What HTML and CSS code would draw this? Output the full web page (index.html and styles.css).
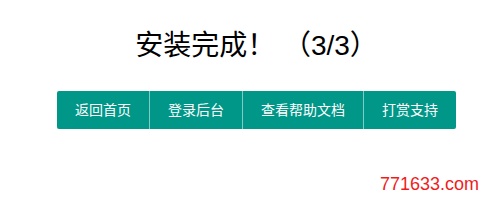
FILE: index.html
```html
<!DOCTYPE html>
<html lang="zh-CN">
<head>
    <meta charset="UTF-8">
    <meta name="viewport" content="width=device-width, initial-scale=1.0">
    <title>安装完成</title>
    <link rel="stylesheet" href="styles.css">
</head>
<body>
    <div class="install-done">
        <h2 class="title">安装完成！ （3/3）</h2>
        <div class="btn-group">
            <a class="btn" href="#">返回首页</a>
            <a class="btn" href="#">登录后台</a>
            <a class="btn" href="#">查看帮助文档</a>
            <a class="btn" href="#">打赏支持</a>
        </div>
    </div>
    <div class="watermark">771633.com</div>
</body>
</html>
```

FILE: styles.css
```css
body {
    margin: 0;
    background: #fff;
    font-family: "Liberation Sans", Arial, "Noto Sans CJK SC", sans-serif;
    color: #333;
}
.install-done {
    display: flex;
    flex-direction: column;
    align-items: center;
    padding: 26px 0 0 20px;
}
.title {
    margin: 0 0 25px;
    font-size: 28px;
    font-weight: normal;
    line-height: 40px;
    color: #000;
}
.btn-group {
    display: flex;
    border-radius: 2px;
    overflow: hidden;
}
.btn {
    display: block;
    height: 38px;
    line-height: 38px;
    padding: 0 18px;
    background: #009688;
    color: #fff;
    font-size: 14px;
    text-decoration: none;
    white-space: nowrap;
}
.btn + .btn {
    border-left: 1px solid rgba(255,255,255,0.5);
}
.watermark {
    position: absolute;
    left: 380px;
    top: 174px;
    font-size: 18px;
    color: #f01c1c;
}
```
